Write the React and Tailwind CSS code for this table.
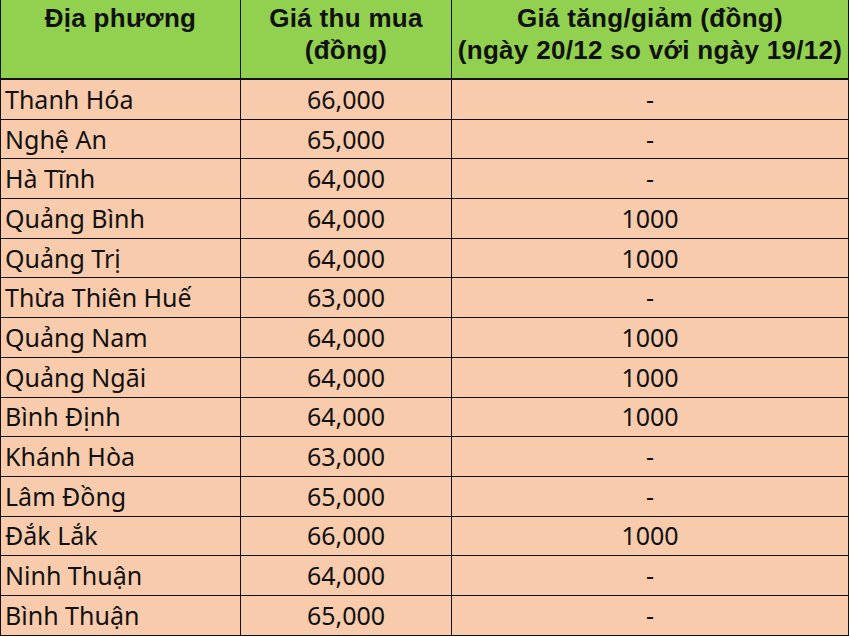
const rows = [
  ["Thanh Hóa", "66,000", "-"],
  ["Nghệ An", "65,000", "-"],
  ["Hà Tĩnh", "64,000", "-"],
  ["Quảng Bình", "64,000", "1000"],
  ["Quảng Trị", "64,000", "1000"],
  ["Thừa Thiên Huế", "63,000", "-"],
  ["Quảng Nam", "64,000", "1000"],
  ["Quảng Ngãi", "64,000", "1000"],
  ["Bình Định", "64,000", "1000"],
  ["Khánh Hòa", "63,000", "-"],
  ["Lâm Đồng", "65,000", "-"],
  ["Đắk Lắk", "66,000", "1000"],
  ["Ninh Thuận", "64,000", "-"],
  ["Bình Thuận", "65,000", "-"],
];

export default function App() {
  return (
    <div className="w-[850px] h-[637px] overflow-hidden bg-white">
      <div className="grid w-[848px] grid-cols-[240px_211px_397px] border-l border-[#111]">
        {/* header */}
        <div className="h-[80px] border-r border-b-2 border-[#111] bg-[#92d050] pt-[2px] text-center font-['Liberation_Sans',Arial,sans-serif] text-[26px] font-bold leading-[32px] tracking-[0.3px] text-[#111]">
          Địa phương
        </div>
        <div className="h-[80px] border-r border-b-2 border-[#111] bg-[#92d050] pt-[2px] text-center font-['Liberation_Sans',Arial,sans-serif] text-[26px] font-bold leading-[32px] tracking-[0.3px] text-[#111]">
          Giá thu mua
          <br />
          (đồng)
        </div>
        <div className="h-[80px] border-r border-b-2 border-[#111] bg-[#92d050] pt-[2px] text-center font-['Liberation_Sans',Arial,sans-serif] text-[26px] font-bold leading-[32px] tracking-[0.3px] text-[#111]">
          Giá tăng/giảm (đồng)
          <br />
          (ngày 20/12 so với ngày 19/12)
        </div>

        {rows.map(([place, price, change]) => (
          <div key={place} className="contents font-['Noto_Sans','Open_Sans',sans-serif] text-[25px] text-[#111]">
            <div className="flex h-[39.7px] items-center border-r border-b border-[#111] bg-[#f8cbad] pl-[4px] leading-none">
              {place}
            </div>
            <div className="flex h-[39.7px] items-center justify-center border-r border-b border-[#111] bg-[#f8cbad] leading-none">
              {price}
            </div>
            <div className="flex h-[39.7px] items-center justify-center border-r border-b border-[#111] bg-[#f8cbad] leading-none">
              {change}
            </div>
          </div>
        ))}
      </div>
    </div>
  );
}
